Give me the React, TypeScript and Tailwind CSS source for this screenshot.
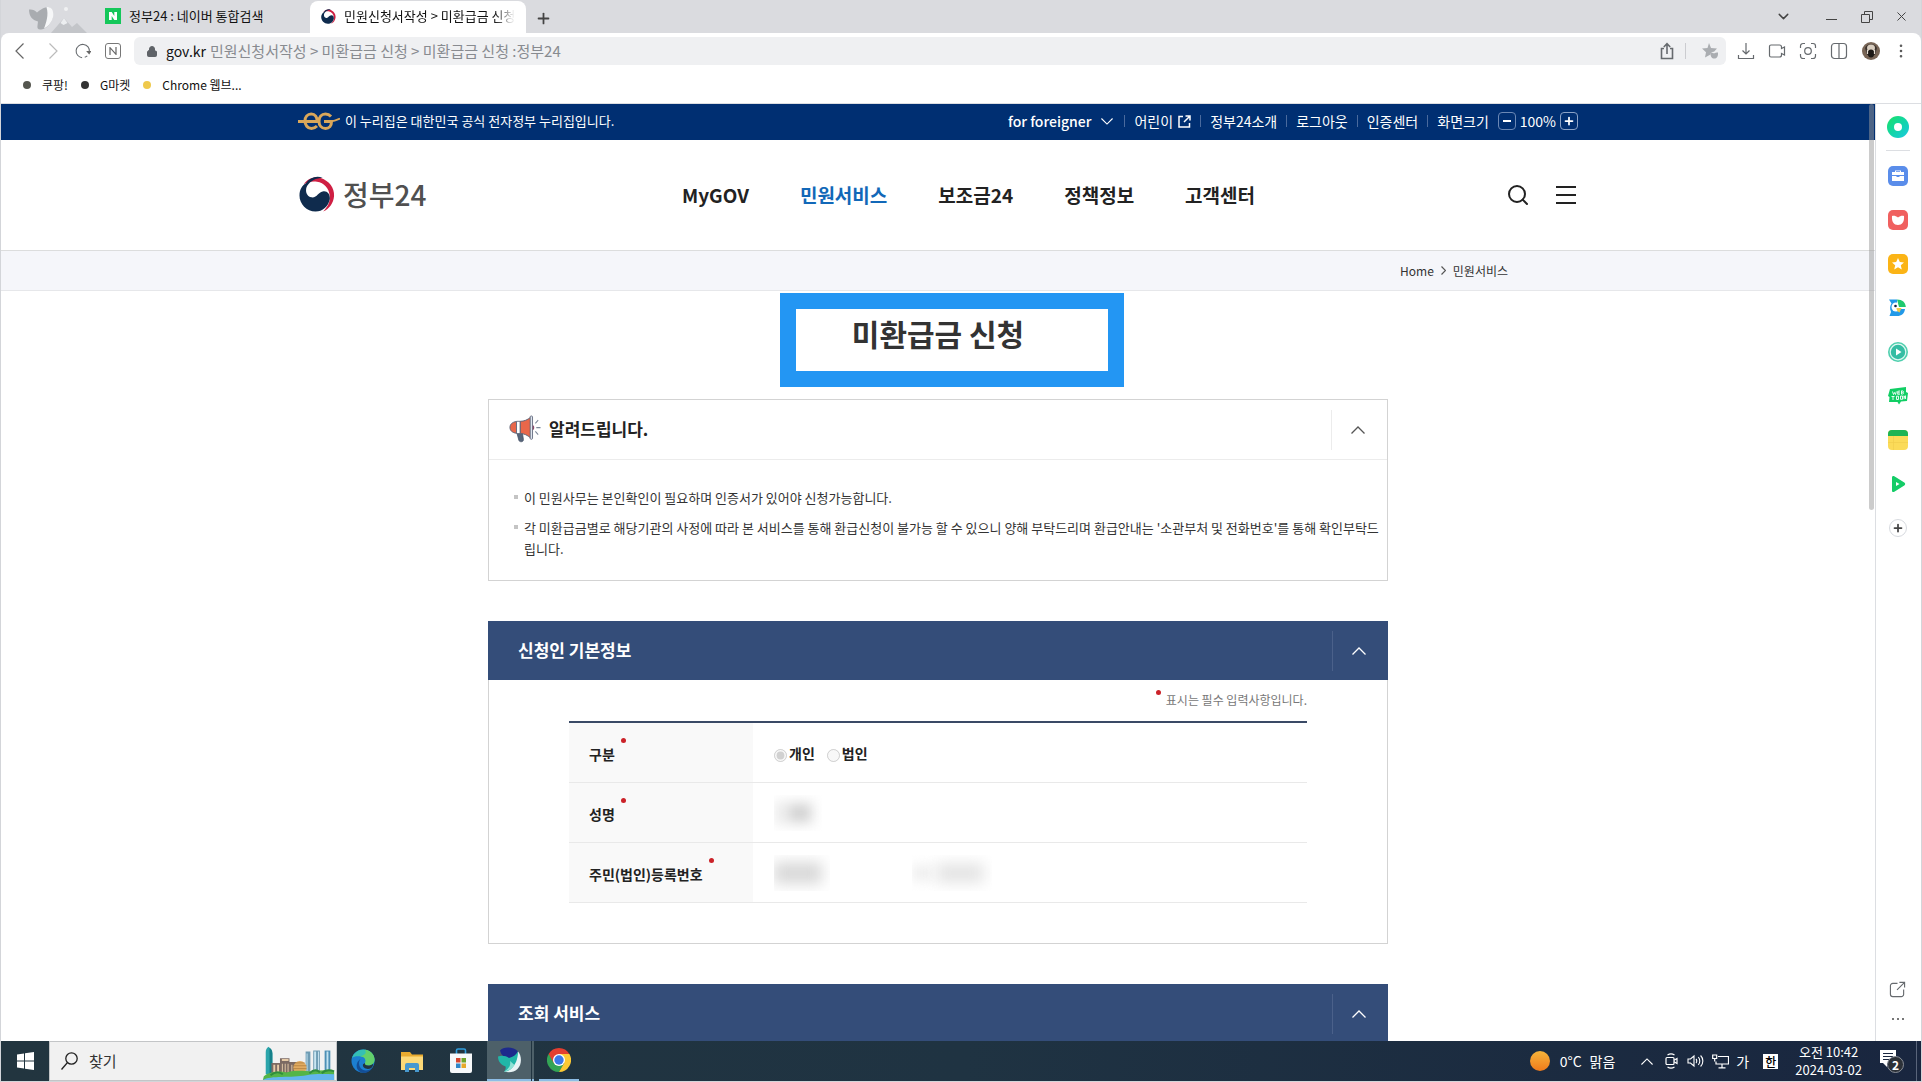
import React, { useState } from "react";
import {
  ChevronDown,
  Lock,
  MoreVertical,
  Plus,
  Search,
  X,
} from "lucide-react";

type SvgProps = { className?: string };

function Taegeuk({ className }: SvgProps) {
  return (
    <svg viewBox="0 0 38 38" className={className} aria-hidden="true">
      <path d="M5 9C9 2.500 17 0 23 2c9 3 14.500 10.500 14 19C36.500 28.500 32 34.500 25.500 37.500c5-5 7.500-10 7-16C32 13 26.500 7 19 6 13 5.400 8 6.500 5 9z" fill="#cf1f43" />
      <path d="M7 8C11.500 1.500 18-.500 25 1.800 18 2 12 5 8.500 10.500 6 15.500 8 21.500 13 22.500c6 1 7-6 13-6.500 4.500-.300 7 3.500 6.500 8.500C31 32 25 37.500 17.500 37.500 8 37.500.500 29.500.500 20.500.500 14.500 3.500 10 7 8z" fill="#0f2b4d" />
    </svg>
  );
}

function EgLogo() {
  return (
    <svg viewBox="0 0 42 18" className="h-[18px] w-[42px]" fill="none" stroke="#d9a75a" strokeWidth="3" aria-hidden="true">
      <path d="M0 9.500h19c.5-4.500-2-7.500-5.800-7.500C9.500 2 7 5 7 9s2.500 7.500 6.500 7.500c2.500 0 4-1 5.500-2.500" />
      <path d="M33 4.500C31.500 2.800 29.500 2 27.500 2 23.500 2 21 5.200 21 9.200s2.500 7.300 6.500 7.300c3.800 0 6-2.800 6-7H26" />
      <path d="M33 9.300c3.500-.3 6-1.500 9-2.800" strokeWidth="1.800" />
    </svg>
  );
}

function Caret({ className, up = true }: SvgProps & { up?: boolean }) {
  return (
    <svg viewBox="0 0 14 8" className={className} fill="none" stroke="currentColor" strokeWidth="1.300" aria-hidden="true">
      <path d={up ? "M.5 7.500 7 1l6.500 6.500" : "M.5.500 7 7 13.500.500"} />
    </svg>
  );
}

function Megaphone() {
  return (
    <svg viewBox="0 0 34 30" className="h-[29px] w-8" aria-hidden="true">
      <path d="M8 17l2.500 9.500c.4 2 5 2.300 4.800-.8L14 17z" fill="#56657a" stroke="#414e63" strokeWidth=".8" />
      <path d="M8 6.500C3.500 7 1 9.500 1 12.800S3.500 18.500 8 19z" fill="#e8674a" stroke="#5b6377" strokeWidth="1" />
      <path d="M8 6.300h4v13H8z" fill="#fff" stroke="#5b6377" strokeWidth=".9" />
      <path d="M12 6.300c4 0 7.500-1.500 11-4.300v22c-3.500-3-7-4.700-11-4.700z" fill="#e8674a" stroke="#5b6377" strokeWidth="1" />
      <path d="M22.500 1.500c0-1.200 2.500-1.200 2.500 0v23c0 1.200-2.500 1.200-2.500 0z" fill="#dfe6f0" stroke="#5b6377" strokeWidth=".9" />
      <path d="M25.300 10.500c2 0 2 5 0 5z" fill="#8b4a6b" />
      <path d="M28 8.500l3-3.500M29 13h4.500M28 17l3 3.500" stroke="#7c8799" strokeWidth="1.100" fill="none" />
    </svg>
  );
}

function WhaleArt() {
  return (
    <svg viewBox="0 0 60 27" className="h-[27px] w-[60px]" aria-hidden="true">
      <path d="M24 27l13-15 8 9 5-4 10 10z" fill="#c3c5c9" />
      <path d="M37 12l3.500 5-4 2-3-2z" fill="#eceef0" />
      <path d="M2 3.500c3-.5 6 .5 8 3C13 4 17 1 22 1c4 4 5 9 2.500 14C22 20 18 23 14 23.500c-3 .3-4-1-3.500-4l.5-4C5 14 2 10 2 3.500z" fill="#a9acb0" />
      <path d="M19.500 1.200C24 0 26.500 4 26.300 9c-.3 6-4.300 11-9.300 13.500C19 17 22 9 19.500 1.200z" fill="#f6f7f8" />
      <circle cx="39" cy="3" r="2" fill="#f0f1f3" />
    </svg>
  );
}

function CityArt() {
  return (
    <svg viewBox="0 0 75 40" className="h-full w-[75px]" aria-hidden="true">
      <path d="M3 34V11c0-3 1-5 3-6 2 2 4 4 4 7v22z" fill="#2ba5ab" />
      <path d="M7 6c2 1 3 3 3 6v22H7z" fill="#15808a" />
      <path d="M45 10h5v22h-5zM53 9h7v23h-7z" fill="#6e9cb4" />
      <path d="M54 10h2v21h-2zM58 10h1v21h-1z" fill="#c9e6f2" />
      <path d="M65 9h6v23h-6z" fill="#4d8fb5" />
      <path d="M67 10h2v21h-2zM46 12h1v19h-1z" fill="#c2e3f1" />
      <path d="M9 22h9v-5h10v4h8v14H9z" fill="#7c6a63" />
      <path d="M20 18h7v2h-7zM11 24h2v8h-2zM15 24h2v8h-2zM20 23h1v9h-1zM23 23h1v9h-1zM26 23h1v9h-1zM30 24h1v8h-1z" fill="#e6cba8" />
      <circle cx="39" cy="27" r="7" fill="#e1ab61" />
      <path d="M32 25h14M32 28h14M34 22h10" stroke="#a87738" strokeWidth=".7" />
      <path d="M1 36c6-5 16-6 24-4 12-3 20-1 26-1 8-1 16-2 24 0v9H0z" fill="#54b548" />
      <path d="M8 35c5-4 9-4 13-1M49 33c5-5 9-3 11-1M62 33c4-4 8-4 13-2" stroke="#2f8d3d" strokeWidth="2" fill="none" />
      <path d="M0 40c8-5 30-2 46-5 11-2 20-1 29-1v6z" fill="#62b6ee" />
    </svg>
  );
}

function EdgeIcon() {
  return (
    <svg viewBox="0 0 24 24" className="h-6 w-6" aria-hidden="true">
      <circle cx="12" cy="12" r="11.500" fill="#1c7fd1" />
      <path d="M1 9C3 3.500 7.500.500 12.500.500 19 .500 23.500 5 23.500 10.500c0 4-3 6-6.500 6-2.500 0-3.500-1-3-2.500 1.500-3 0-6-4-6.500C6 7 2.500 7.500 1 9z" fill="#35c0b4" />
      <path d="M14 .700C20 1.500 23.500 6 23.500 10.500c0 4-3 6-6.500 6-2.500 0-3.500-1-3-2.500 2-3-.500-7-5-6.500C14 6 16 4 14 .700z" fill="#63d06b" />
      <path d="M9.500 10c-2 2.500-2 6.500.500 9.500 2.500 2.500 7 3 11-.500-3 5.500-9 6-12.500 3.500C4.500 20 4.500 13 9.500 10z" fill="#144e96" />
      <path d="M14 14c-.500 1.500.500 2.500 3 2.500 2 0 4-.600 5.200-2 0 2.500-1.200 4-2.200 4.800-4 2-9-.5-8-4z" fill="#22343f" />
    </svg>
  );
}

function FolderIcon() {
  return (
    <svg viewBox="0 0 24 24" className="h-6 w-6" aria-hidden="true">
      <path d="M1 3h9l2 2.500h11V21H1z" fill="#e9ab2f" />
      <path d="M1 7.500h22V21H1z" fill="#fcd978" />
      <path d="M5 23v-7a2 2 0 0 1 2-2h10a2 2 0 0 1 2 2v7h-4v-4H9v4z" fill="#4798cf" />
    </svg>
  );
}

function StoreIcon() {
  return (
    <svg viewBox="0 0 24 26" className="h-[26px] w-6" aria-hidden="true">
      <path d="M7.500 6V2.500a1.500 1.500 0 0 1 1.500-1.500h6a1.500 1.500 0 0 1 1.500 1.500V6" fill="none" stroke="#2f9ddd" strokeWidth="1.600" />
      <path d="M1 5.500h22V23a2 2 0 0 1-2 2H3a2 2 0 0 1-2-2z" fill="#f6f8fa" />
      <path d="M7 10h4.500v4.500H7z" fill="#d5452f" />
      <path d="M12.500 10H17v4.500h-4.500z" fill="#6fa42b" />
      <path d="M7 15.500h4.500V20H7z" fill="#2f87c9" />
      <path d="M12.500 15.500H17V20h-4.500z" fill="#e7a829" />
    </svg>
  );
}

function WhaleIcon() {
  return (
    <svg viewBox="0 0 24 26" className="h-[26px] w-6" aria-hidden="true">
      <path d="M3 3.500C6-.500 17-.500 21 4.500c-1.500 4-5 6.500-9 6.500C7 11 4 8 3 3.500z" fill="#1d2a8c" />
      <path d="M21 4.500c4 4.500 4 13-.500 17.500-3.500 3.500-9 3.800-13.500 2.500 7-3 11-10 14-20z" fill="#e8f3f5" />
      <path d="M1 9.500c4-1.500 8-.5 11 1.500 4-1 7-3 9-6.500 0 8-3 13.500-6 16.500-2.500 2.500-5 3.500-8 3.500 1.500-1.500 2-3.500 1.500-5C4 18 1 14.500 1 9.500z" fill="#21b6a8" />
      <path d="M13 14c1 4-1 8-6 10.500 4-.2 8-2.500 10.500-6.500z" fill="#8ee2d5" />
    </svg>
  );
}

function ChromeIcon() {
  return (
    <svg viewBox="0 0 24 26" className="h-[26px] w-6" aria-hidden="true">
      <path d="M12 13L1.600 7A12 12 0 0 0 12 25l5-8z" fill="#33a455" />
      <path d="M12 7h10.400A12 12 0 0 1 12 25l5.200-9z" fill="#fcc934" />
      <path d="M1.600 7L6.800 16 12 13V7h10.400A12 12 0 0 0 1.600 7z" fill="#e33e30" />
      <circle cx="12" cy="13" r="6" fill="#fff" />
      <circle cx="12" cy="13" r="4.700" fill="#3b78e7" />
    </svg>
  );
}

const lineIcon = "h-[18px] w-[18px]";

function ToolbarSvg({ children, className }: { children: React.ReactNode; className?: string }) {
  return (
    <svg viewBox="0 0 18 18" className={className ?? lineIcon} fill="none" stroke="#666a6e" strokeWidth="1.200" aria-hidden="true">
      {children}
    </svg>
  );
}

function IconButton({ label, children, className }: { label: string; children: React.ReactNode; className?: string }) {
  return (
    <button type="button" aria-label={label} className={"flex shrink-0 items-center justify-center " + (className ?? "w-[31px]")}>
      {children}
    </button>
  );
}

function TabStrip() {
  return (
    <div className="flex h-[33px] shrink-0 items-stretch bg-[#dadbdf] text-[13px] leading-5 text-[#111]">
      <div className="flex w-[104px] items-end justify-end pr-[18px]">
        <WhaleArt />
      </div>
      <button type="button" className="flex w-[205px] items-center gap-2 pb-px text-left">
        <span className="flex h-4 w-4 items-center justify-center bg-[#14c75a]">
          <svg viewBox="0 0 8 8" className="h-2 w-2" fill="#fff" aria-hidden="true">
            <path d="M0 0h2.700l2.600 4V0H8v8H5.300L2.700 4v4H0z" />
          </svg>
        </span>
        정부24 : 네이버 통합검색
      </button>
      <div className="mt-px flex w-[216px] items-center gap-2 rounded-t-lg bg-white pb-0.5 pl-[11px] pr-1">
        <Taegeuk className="h-[15px] w-[15px] shrink-0" />
        <span className="whitespace-nowrap [mask-image:linear-gradient(to_right,black_88%,transparent)]">
          민원신청서작성 &gt; 미환급금 신청
        </span>
      </div>
      <IconButton label="새 탭" className="w-[34px] pt-1">
        <Plus className="h-[17px] w-[17px] text-[#444]" strokeWidth={2.500} />
      </IconButton>
      <div className="ml-auto flex items-center pr-[2px] text-[#444] [&_button]:h-7">
        <IconButton label="탭 목록" className="mr-[13px] w-[34px]">
          <ChevronDown className="h-[17px] w-[17px]" />
        </IconButton>
        <IconButton label="최소화" className="w-9 pt-1.5">
          <span className="h-px w-[11px] bg-[#444]" />
        </IconButton>
        <IconButton label="이전 크기로" className="w-[35px]">
          <svg viewBox="0 0 12 12" className="h-3 w-3" fill="none" stroke="#444" aria-hidden="true">
            <path d="M.5 3.500h8v8h-8zM3.500 3.500v-3h8v8h-3" />
          </svg>
        </IconButton>
        <IconButton label="닫기" className="w-[35px]">
          <X className="h-[15px] w-[15px]" strokeWidth={1.600} />
        </IconButton>
      </div>
    </div>
  );
}

function AddressRow() {
  return (
    <div className="flex h-9 shrink-0 items-center pr-1.5">
      <IconButton label="뒤로" className="w-[36px]">
        <svg viewBox="0 0 9 16" className="h-4 w-[9px]" fill="none" stroke="#666" strokeWidth="1.200"><path d="M8.500.500 1 8l7.500 7.500" /></svg>
      </IconButton>
      <IconButton label="앞으로" className="w-[32px]">
        <svg viewBox="0 0 9 16" className="h-4 w-[9px]" fill="none" stroke="#bbb" strokeWidth="1.200"><path d="M.5.500 8 8 .500 15.500" /></svg>
      </IconButton>
      <IconButton label="새로고침" className="w-[27px]">
        <ToolbarSvg className="h-4 w-4">
          <path d="M8 16.500A7.500 7.500 0 1 1 16.200 10M11 16c1-.3 2-.8 2.800-1.500" />
          <path d="M12.500 9h6l-2.500 4z" fill="#666" stroke="none" />
        </ToolbarSvg>
      </IconButton>
      <IconButton label="네이버 홈" className="w-[34px]">
        <span className="flex h-4 w-4 items-center justify-center rounded-[3px] border border-[#777]">
          <svg viewBox="0 0 8 8" className="h-2 w-2" fill="none" stroke="#666" strokeWidth="1.200"><path d="M1 8V.700l6 6.600V0" /></svg>
        </span>
      </IconButton>
      <div className="ml-1 flex h-7 min-w-0 flex-1 items-center rounded-md bg-[#eff0f2] pl-3 text-[15px] leading-5">
        <Lock className="mr-2 h-[13px] w-[12px] shrink-0 fill-[#5f6368] text-[#5f6368]" />
        <label htmlFor="address" className="mr-1 text-[14px] text-[#111]">gov.kr</label>
        <input
          id="address"
          readOnly
          className="min-w-0 flex-1 bg-transparent text-[#888b90] outline-none"
          value="민원신청서작성 > 미환급금 신청 > 미환급금 신청 :정부24"
        />
        <IconButton label="공유" className="w-10 pl-1">
          <ToolbarSvg>
            <path d="M6 6.500H3.500v10h11v-10H12M9 12V2M5.800 5 9 1.700 12.200 5" strokeWidth="1.600" />
          </ToolbarSvg>
        </IconButton>
        <span className="h-4 w-px bg-[#cbccd0]" />
        <IconButton label="북마크" className="w-10 pl-2">
          <ToolbarSvg>
            <path d="M8 1l2 5 6 .5-3 3.200c-2-.2-3.500.5-3.500 2.800L4 15.500l1-5.200L1 6.500 6.500 6z" fill="#aaadb1" stroke="none" />
            <path d="M9.500 10.500c1 0 2.500.3 3.500 1 1-.7 2.500-1 4-1 .3 4-1.200 6-3.700 6s-4-2-3.800-6z" fill="#aaadb1" stroke="none" />
          </ToolbarSvg>
        </IconButton>
      </div>
      <div className="ml-[4px] flex items-center">
        <IconButton label="다운로드">
          <ToolbarSvg>
            <path d="M9 1v11M5.500 8.500 9 12l3.500-3.500M1.500 13v3.500h15V13" />
          </ToolbarSvg>
        </IconButton>
        <IconButton label="동영상">
          <ToolbarSvg>
            <path d="M3 3h8.500a2 2 0 0 1 2 2v1.500L16.500 5v8l-3-1.500V13a2 2 0 0 1-2 2H3a1.500 1.500 0 0 1-1.500-1.500v-9A1.500 1.500 0 0 1 3 3z" />
          </ToolbarSvg>
        </IconButton>
        <IconButton label="캡처">
          <ToolbarSvg>
            <path d="M1.500 6V4A2.500 2.500 0 0 1 4 1.500h2M12 1.500h2A2.500 2.500 0 0 1 16.500 4v2M16.500 12v2a2.500 2.500 0 0 1-2.500 2.500h-2M6 16.500H4A2.500 2.500 0 0 1 1.500 14v-2" />
            <circle cx="9" cy="9" r="3.300" />
          </ToolbarSvg>
        </IconButton>
        <IconButton label="화면 분할">
          <ToolbarSvg>
            <rect x="1.500" y="1.500" width="15" height="15" rx="3" />
            <path d="M9 1.500v15" />
          </ToolbarSvg>
        </IconButton>
        <IconButton label="프로필" className="w-[33px]">
          <svg viewBox="0 0 18 18" className={lineIcon} aria-hidden="true">
            <circle cx="9" cy="9" r="9" fill="#786556" />
            <path d="M3 6c1-3 4-4 6-4s5 1 6 4l-2 7H5z" fill="#3c332d" />
            <ellipse cx="9" cy="6" rx="4" ry="3.500" fill="#d8cdbf" />
            <ellipse cx="9" cy="11.500" rx="3.200" ry="4" fill="#1d1916" />
            <path d="M5.500 8v4M12.500 8v4" stroke="#e6ded3" strokeWidth="1.200" />
          </svg>
        </IconButton>
        <IconButton label="더보기" className="w-[28px]">
          <MoreVertical className="h-[18px] w-[18px] text-[#555]" strokeWidth={1.500} />
        </IconButton>
      </div>
    </div>
  );
}

const bookmarks = [
  { label: "쿠팡!", dot: "bg-[#55564f]" },
  { label: "G마켓", dot: "bg-[#333]" },
  { label: "Chrome 웹브...", dot: "bg-[#efc94c]" },
];

function Bookmarks() {
  return (
    <div className="flex h-[35px] shrink-0 items-center gap-[13px] border-b border-[#dcdee2] pb-0.5 pl-[22px] text-[12px] leading-5 text-[#111]">
      {bookmarks.map((b) => (
        <a key={b.label} href="#" className="flex items-center gap-[11px]">
          <span className={"h-2 w-2 rounded-full " + b.dot} />
          {b.label}
        </a>
      ))}
    </div>
  );
}

function Divider() {
  return <span className="h-3 w-px bg-[#4a6a9d]" />;
}

function TopBar() {
  return (
    <div className="bg-[#002f72] text-white">
      <div className="mx-auto flex h-9 max-w-[1280px] items-center pb-0.5 text-[14px] leading-5">
        <EgLogo />
        <span className="ml-[5px] text-[13px]">이 누리집은 대한민국 공식 전자정부 누리집입니다.</span>
        <div className="ml-auto flex items-center gap-[9px] text-[14px]">
          <button type="button" className="flex items-center gap-[10px] pr-0.5 font-medium">
            for foreigner
            <Caret up={false} className="h-[7px] w-3" />
          </button>
          <Divider />
          <a href="#" className="flex items-center gap-[5px]">
            어린이
            <svg viewBox="0 0 13 13" className="h-[13px] w-[13px]" fill="none" stroke="#fff" strokeWidth="1.500" aria-hidden="true">
              <path d="M5 1.500H1v10.500h10.500V8M7.500 1H12v4.500M12 1 6 7" />
            </svg>
          </a>
          <Divider />
          <a href="#">정부24소개</a>
          <Divider />
          <a href="#">로그아웃</a>
          <Divider />
          <a href="#">인증센터</a>
          <Divider />
          <span>화면크기</span>
          <div className="flex items-center gap-1">
            <button type="button" aria-label="축소" className="flex h-[18px] w-[18px] items-center justify-center rounded border border-[#6b88b5]">
              <span className="h-[2px] w-2 bg-white" />
            </button>
            <span className="text-[14px]">100%</span>
            <button type="button" aria-label="확대" className="flex h-[18px] w-[18px] items-center justify-center rounded border border-[#8ba2c6]">
              <Plus className="h-3 w-3" strokeWidth={3.500} />
            </button>
          </div>
        </div>
      </div>
    </div>
  );
}

const navItems = ["MyGOV", "민원서비스", "보조금24", "정책정보", "고객센터"];

function SiteHeader() {
  return (
    <header className="border-b border-[#dcdddd]">
      <div className="mx-auto flex h-[110px] max-w-[1280px] items-center">
        <a href="#" className="flex w-[384px] items-center gap-[7px] pb-0.5 text-[28px] font-medium leading-9 text-[#505050]">
          <Taegeuk className="h-9 w-[38px]" />
          정부24
        </a>
        <nav className="flex gap-[51px] text-[19px] font-bold leading-7 text-[#222]">
          {navItems.map((n) => (
            <a key={n} href="#" className={n === "민원서비스" ? "text-[#1268b8]" : ""}>
              {n}
            </a>
          ))}
        </nav>
        <div className="ml-auto flex items-center gap-[26px] pr-[2px] text-[#222]">
          <button type="button" aria-label="검색">
            <Search className="h-6 w-6" strokeWidth={2} />
          </button>
          <button type="button" aria-label="전체메뉴" className="flex w-5 flex-col gap-1.5">
            <span className="h-0.5 bg-[#222]" />
            <span className="h-0.5 bg-[#222]" />
            <span className="h-0.5 bg-[#222]" />
          </button>
        </div>
      </div>
    </header>
  );
}

function Breadcrumb() {
  return (
    <div className="border-b border-[#e6e7ea] bg-[#f5f6fa]">
      <div className="mx-auto flex h-[39px] max-w-[1280px] items-center justify-end gap-[7px] pr-[70px] text-[12px] leading-5 text-[#333]">
        <a href="#">Home</a>
        <svg viewBox="0 0 5 9" className="h-[9px] w-[5px]" fill="none" stroke="#555" strokeWidth="1.200" aria-hidden="true"><path d="M.5.500l4 4-4 4" /></svg>
        <a href="#">민원서비스</a>
      </div>
    </div>
  );
}

function Bar({ title, open, onToggle }: { title: string; open: boolean; onToggle: () => void }) {
  return (
    <div className="flex h-[59px] items-center justify-between bg-[#344d79] pl-[30px] text-white">
      <h2 className="pb-0.5 text-[17px] font-bold leading-6">{title}</h2>
      <button type="button" aria-label={title + " 접기"} aria-expanded={open} onClick={onToggle} className="flex h-10 w-14 items-center justify-center border-l border-[#4b618a] pr-1">
        <Caret up={open} className="h-2 w-3.5" />
      </button>
    </div>
  );
}

function RedDot() {
  return <span className="h-[5px] w-[5px] shrink-0 rounded-full bg-[#cb2229]" />;
}

function Row({ label, children }: { label: string; children: React.ReactNode }) {
  return (
    <tr className="border-b border-[#e9e9e9]">
      <th scope="row" className="w-[184px] bg-[#f9f9f9] pb-[11px] pl-5 pt-[15px] text-left align-top text-[14px] font-bold leading-[33px] text-[#222]">
        <span className="flex items-start gap-1.5">
          {label}
          <RedDot />
        </span>
      </th>
      <td className="pl-[21px]">{children}</td>
    </tr>
  );
}

function ApplicantCard() {
  const [open, setOpen] = useState(true);
  return (
    <section className="mt-10">
      <Bar title="신청인 기본정보" open={open} onToggle={() => setOpen(!open)} />
      {open && (
        <div className="border border-t-0 border-[#d3d3d3] px-20 pb-10 pt-2.5">
          <p className="mb-[11px] flex items-start justify-end gap-[5px] text-[12px] leading-5 text-[#777]">
            <RedDot />
            표시는 필수 입력사항입니다.
          </p>
          <table className="w-full border-collapse border-t-2 border-[#3a4a66]">
            <tbody>
              <Row label="구분">
                <div className="flex items-center gap-3 text-[14px] font-bold leading-5 text-[#222]">
                  <label className="flex items-center gap-0.5">
                    <input type="radio" name="kind" defaultChecked disabled className="mt-1.5 h-[13px] w-[13px]" />
                    개인
                  </label>
                  <label className="flex items-center gap-0.5">
                    <input type="radio" name="kind" disabled className="mt-1.5 h-[13px] w-[13px]" />
                    법인
                  </label>
                </div>
              </Row>
              <Row label="성명">
                <div className="flex h-9 w-12 items-center overflow-hidden">
                  <div className="flex h-6 w-10 items-center bg-[#ededed] pl-4 blur-[6px]">
                    <div className="h-4 w-5 bg-[#d2d2d2]" />
                  </div>
                </div>
              </Row>
              <Row label="주민(법인)등록번호">
                <div className="flex items-center gap-[82px]">
                  <div className="flex h-9 w-14 items-center overflow-hidden">
                    <div className="h-[22px] w-12 bg-[#d9d9d9] blur-[7px]" />
                  </div>
                  <div className="flex h-9 w-20 items-center gap-1 overflow-hidden">
                    <div className="h-4 w-5 bg-[#efefef] blur-[6px]" />
                    <div className="h-5 w-12 bg-[#e5e5e5] blur-[7px]" />
                  </div>
                </div>
              </Row>
            </tbody>
          </table>
        </div>
      )}
    </section>
  );
}

const notices = [
  "이 민원사무는 본인확인이 필요하며 인증서가 있어야 신청가능합니다.",
  "각 미환급금별로 해당기관의 사정에 따라 본 서비스를 통해 환급신청이 불가능 할 수 있으니 양해 부탁드리며 환급안내는 '소관부처 및 전화번호'를 통해 확인부탁드립니다.",
];

function NoticeCard() {
  const [open, setOpen] = useState(true);
  return (
    <section className="border border-[#d3d3d3]">
      <div className="flex h-[59px] items-center gap-2 pl-5">
        <Megaphone />
        <h2 className="pb-0.5 text-[17px] font-bold leading-6 text-[#222]">알려드립니다.</h2>
        <button type="button" aria-label="알려드립니다 접기" aria-expanded={open} onClick={() => setOpen(!open)} className="ml-auto flex h-10 w-14 items-center justify-center border-l border-[#ececec] pr-1 text-[#555]">
          <Caret up={open} className="h-2 w-3.5" />
        </button>
      </div>
      {open && (
        <ul className="space-y-[9px] border-t border-[#ececec] pb-[21px] pl-[25px] pr-1 pt-[27px] text-[13px] leading-[21px] text-[#333]">
          {notices.map((n) => (
            <li key={n} className="flex break-all">
              <span className="mr-1.5 mt-2 h-1 w-1 shrink-0 bg-[#c4c4c4]" />
              {n}
            </li>
          ))}
        </ul>
      )}
    </section>
  );
}

function QueryCard() {
  const [open, setOpen] = useState(true);
  return (
    <section className="mt-10">
      <Bar title="조회 서비스" open={open} onToggle={() => setOpen(!open)} />
      {open && <div className="h-60 border border-t-0 border-[#d3d3d3]" />}
    </section>
  );
}

function SitePage() {
  return (
    <div className="relative min-w-0 flex-1 overflow-hidden bg-white">
      <TopBar />
      <SiteHeader />
      <Breadcrumb />
      <main className="mx-auto max-w-[900px]">
        <div className="relative pb-[46px] pt-[22px]">
          <h1 className="text-center text-[30px] font-bold leading-10 text-[#333]">미환급금 신청</h1>
          <div className="absolute left-1/2 top-0.5 ml-[-158px] h-[94px] w-[344px] border-[16px] border-[#2396f3]" />
        </div>
        <NoticeCard />
        <ApplicantCard />
        <QueryCard />
      </main>
      <div className="absolute right-px top-0 h-[406px] w-[5px] rounded-full bg-[#9a9a9a]/50" />
    </div>
  );
}

const tile = "h-5 w-5";

const sideItems: { label: string; icon: React.ReactNode }[] = [
  {
    label: "도구",
    icon: (
      <svg viewBox="0 0 20 20" className={tile}>
        <rect width="20" height="20" rx="5" fill="#5a8dea" />
        <path d="M7 6V4.500h6V6h3v3H4V6zm1 0h4v-.7H8zM4 10h4.500v1h3v-1H16v5H4z" fill="#fff" />
      </svg>
    ),
  },
  {
    label: "포켓",
    icon: (
      <svg viewBox="0 0 20 20" className={tile}>
        <rect width="20" height="20" rx="5" fill="#f0605f" />
        <path d="M4 6c2-.5 4 0 6 1.500C12 6 14 5.500 16 6c.5 6-2 9-6 9s-6.500-3-6-9z" fill="#fff" />
      </svg>
    ),
  },
  {
    label: "즐겨찾기",
    icon: (
      <svg viewBox="0 0 20 20" className={tile}>
        <rect width="20" height="20" rx="5" fill="#fbb416" />
        <path d="M10 4l1.800 4 4.200.400-3.200 2.800 1 4.300L10 13.200l-3.800 2.300 1-4.300L4 8.400 8.200 8z" fill="#fff" />
      </svg>
    ),
  },
  {
    label: "파파고",
    icon: (
      <svg viewBox="0 0 20 20" className={tile}>
        <path d="M1 1.500h8V18H1.500L3 14C1.500 10.500 2 7.500 3.500 5.500z" fill="#2299e8" />
        <path d="M9 11h8c-.5 4.500-3.500 7-8 7z" fill="#2299e8" />
        <circle cx="8" cy="9" r="4.500" fill="#fff" />
        <path d="M9 1.500c5.500 0 8.500 3 8.800 7.500H11z" fill="#1fc96e" />
        <path d="M8.500 10h5l-2 4.500c-2-.7-3-2.500-3-4.500z" fill="#f3c944" />
        <circle cx="7.500" cy="8" r="1.300" fill="#112244" />
      </svg>
    ),
  },
  {
    label: "뮤직",
    icon: (
      <svg viewBox="0 0 20 20" className={tile}>
        <circle cx="10" cy="10" r="10" fill="#4fcfae" />
        <circle cx="10" cy="10" r="7.800" fill="#35bda3" stroke="#dff8f1" strokeWidth="1.200" />
        <path d="M8 6.500l5.500 3.500L8 13.500z" fill="#fff" />
      </svg>
    ),
  },
  {
    label: "웹툰",
    icon: (
      <svg viewBox="0 0 20 20" className={tile}>
        <path d="M2 3l16-2v5l2 1-1 8-6 .5-2 3-1.500-2.500L1 16l.5-5L0 10z" fill="#11ce64" />
        <path d="M4.500 5.500l1 3 1-2 1 2 .8-3M12 5l-2.300.3v3l2.300-.2M10 6.800h1.800M13.500 4.800v3.300c3 0 2.500-2 1-1.700 1.500-.5 1-1.800-1-1.600M3.500 10.500h3M5 10.500V14M8.500 10.200v3.300h2v-3.300zM12.500 10v3.300h2V10zM16 13.200V9.800l1.500 3V9.500" stroke="#fff" strokeWidth=".9" fill="none" />
      </svg>
    ),
  },
  {
    label: "메모",
    icon: (
      <svg viewBox="0 0 20 20" className={tile}>
        <rect width="20" height="20" rx="4" fill="#fbdb59" />
        <path d="M4 0h12a4 4 0 0 1 4 4v2H0V4a4 4 0 0 1 4-4z" fill="#1db454" />
        <path d="M0 12.500h20M5.500 6v14" stroke="#f0cf4d" strokeWidth=".7" />
      </svg>
    ),
  },
  {
    label: "동영상",
    icon: (
      <svg viewBox="0 0 20 20" className={tile}>
        <path d="M4 3.500c0-1.500 1-2 2.300-1.300l10 6.300c1.200.7 1.200 2.300 0 3l-10 6.300C5 18.500 4 18 4 16.500z" fill="#14cc67" />
        <path d="M8 8l3.500 2L8 12z" fill="#fff" />
      </svg>
    ),
  },
  {
    label: "추가",
    icon: (
      <span className="flex h-[18px] w-[18px] items-center justify-center rounded-full border border-[#d7dadf]">
        <Plus className="h-3 w-3 text-[#444]" strokeWidth={3.500} />
      </span>
    ),
  },
];

function Sidebar() {
  return (
    <aside className="flex w-[46px] shrink-0 flex-col items-center border-l border-[#dcdee2] bg-white pr-0.5 pt-3">
      <button type="button" aria-label="그린닷" className="flex h-[22px] w-[22px] items-center justify-center rounded-full bg-gradient-to-br from-[#1fe05c] to-[#1fc8e0]">
        <span className="h-2 w-2 rounded-full bg-white" />
      </button>
      <span className="mb-[3px] mt-3 h-px w-6 bg-[#dcdee2]" />
      {sideItems.map((s) => (
        <IconButton key={s.label} label={s.label} className="h-11 w-full">
          {s.icon}
        </IconButton>
      ))}
      <div className="mt-auto flex flex-col items-center gap-5 pb-[21px]">
        <button type="button" aria-label="새 창으로 열기">
          <ToolbarSvg className="h-[17px] w-[17px]">
            <path d="M9 2.500H4A2.500 2.500 0 0 0 1.500 5v9A2.500 2.500 0 0 0 4 16.500h9a2.500 2.500 0 0 0 2.500-2.500V9M11 1.500h5.500V7M16.500 1.500 8.500 9.500" />
          </ToolbarSvg>
        </button>
        <button type="button" aria-label="더보기" className="flex gap-[3px]">
          <span className="h-0.5 w-0.5 bg-[#777]" />
          <span className="h-0.5 w-0.5 bg-[#777]" />
          <span className="h-0.5 w-0.5 bg-[#777]" />
        </button>
      </div>
    </aside>
  );
}

function Taskbar() {
  return (
    <footer className="flex h-10 shrink-0 items-stretch bg-gradient-to-r from-[#22353f] via-[#1f3342] to-[#19263f] text-white">
      <IconButton label="시작" className="w-12">
        <svg viewBox="0 0 17 18" className="h-[18px] w-[17px]" fill="#fff" aria-hidden="true">
          <path d="M0 2.500l7-1v7H0zM8 1.300L17 0v8.500H8zM0 9.500h7v7l-7-1zM8 9.500h9V18l-9-1.300z" />
        </svg>
      </IconButton>
      <label className="flex w-[288px] items-center border border-[#c3c5c7] bg-[#f1f1f1] pl-[11px]">
        <svg viewBox="0 0 17 18" className="h-[18px] w-[17px] shrink-0" fill="none" stroke="#222" strokeWidth="1.300" aria-hidden="true">
          <circle cx="10.500" cy="6.500" r="5.700" />
          <path d="M6.500 10.500L.500 17.500" />
        </svg>
        <input aria-label="찾기" placeholder="찾기" className="ml-[11px] min-w-0 flex-1 bg-transparent text-[15px] leading-5 outline-none placeholder:text-[#333]" />
        <CityArt />
      </label>
      <IconButton label="Edge" className="w-[52px]"><EdgeIcon /></IconButton>
      <IconButton label="파일 탐색기" className="w-[46px]"><FolderIcon /></IconButton>
      <IconButton label="Microsoft Store" className="w-[52px]"><StoreIcon /></IconButton>
      <IconButton label="Whale" className="w-[44px] border-b-2 border-[#8dbde6] bg-[#4d6069]"><WhaleIcon /></IconButton>
      <span className="ml-px w-[2px] border-b-2 border-[#8dbde6] bg-[#4d6069]" />
      <IconButton label="Chrome" className="ml-[5px] w-10 border-b-2 border-[#8dbde6]"><ChromeIcon /></IconButton>

      <div className="ml-auto flex items-center text-[14px] leading-5">
        <span className="mr-2.5 h-5 w-5 rounded-full bg-gradient-to-b from-[#f6b43a] to-[#ee7a1b]" />
        <span>0°C</span>
        <span className="ml-2">맑음</span>
        <IconButton label="숨겨진 아이콘 표시" className="ml-[22px] w-5">
          <Caret className="h-[7px] w-3" />
        </IconButton>
        <svg viewBox="0 0 14 16" className="ml-2 h-4 w-3.5" fill="none" stroke="#fff" strokeWidth="1.200" aria-hidden="true">
          <rect x="1" y="4.500" width="8" height="7" rx="1" />
          <path d="M9 7.200l3-1.700v5l-3-1.700M2.500 2c2-1.300 5-1.300 7 0M2.500 14c2 1.300 5 1.300 7 0" />
        </svg>
        <svg viewBox="0 0 18 14" className="ml-2 h-3.5 w-[18px]" fill="none" stroke="#fff" strokeWidth="1.100" aria-hidden="true">
          <path d="M1 5v4h2.500L7 12V2L3.500 5zM9 5c1 1 1 3 0 4M11.300 3.200c2 2 2 5.600 0 7.600M13.600 1.500c3 3 3 8 0 11" />
        </svg>
        <svg viewBox="0 0 17 15" className="ml-[7px] h-[15px] w-[17px]" fill="none" stroke="#fff" strokeWidth="1.200" aria-hidden="true">
          <path d="M6 2.500h10.500V10H4V7.500M10 10v3.500M6.500 13.800h7" />
          <path d="M.7 1h4v3.500h-4zM2.700 4.500v3" />
        </svg>
        <span className="ml-[7px]">가</span>
        <span className="ml-3.5 flex h-[15px] w-[15px] items-center justify-center bg-white text-[12px] font-medium leading-[15px] text-black">한</span>
        <div className="ml-[17px] text-center text-[13px] leading-[18px]">
          <div>오전 10:42</div>
          <div>2024-03-02</div>
        </div>
        <button type="button" aria-label="알림 2개" className="relative ml-[18px] mr-3 h-6 w-6">
          <svg viewBox="0 0 24 24" className="h-6 w-6" aria-hidden="true">
            <path d="M0 1h16v13h-9v4l-4-4H0z" fill="#fff" />
            <path d="M3 4.500h10M3 7.500h10M3 10.500h6" stroke="#1b2740" strokeWidth="1.200" />
          </svg>
          <span className="absolute left-[7px] top-[7px] flex h-[17px] w-[17px] items-center justify-center rounded-full border border-[#8a8f98] bg-[#2c3138] text-[12px] font-bold leading-none">
            2
          </span>
        </button>
        <span className="mr-1 h-10 w-px bg-[#59647a]" />
      </div>
    </footer>
  );
}

export default function App() {
  return (
    <div className="flex h-screen flex-col overflow-hidden border-x border-b border-[#d3d5d9] bg-[#dadbdf] font-['Noto_Sans_CJK_KR',sans-serif]">
      <TabStrip />
      <div className="flex shrink-0 flex-col rounded-t-lg bg-white">
        <AddressRow />
        <Bookmarks />
      </div>
      <div className="flex min-h-0 flex-1">
        <SitePage />
        <Sidebar />
      </div>
      <Taskbar />
    </div>
  );
}
